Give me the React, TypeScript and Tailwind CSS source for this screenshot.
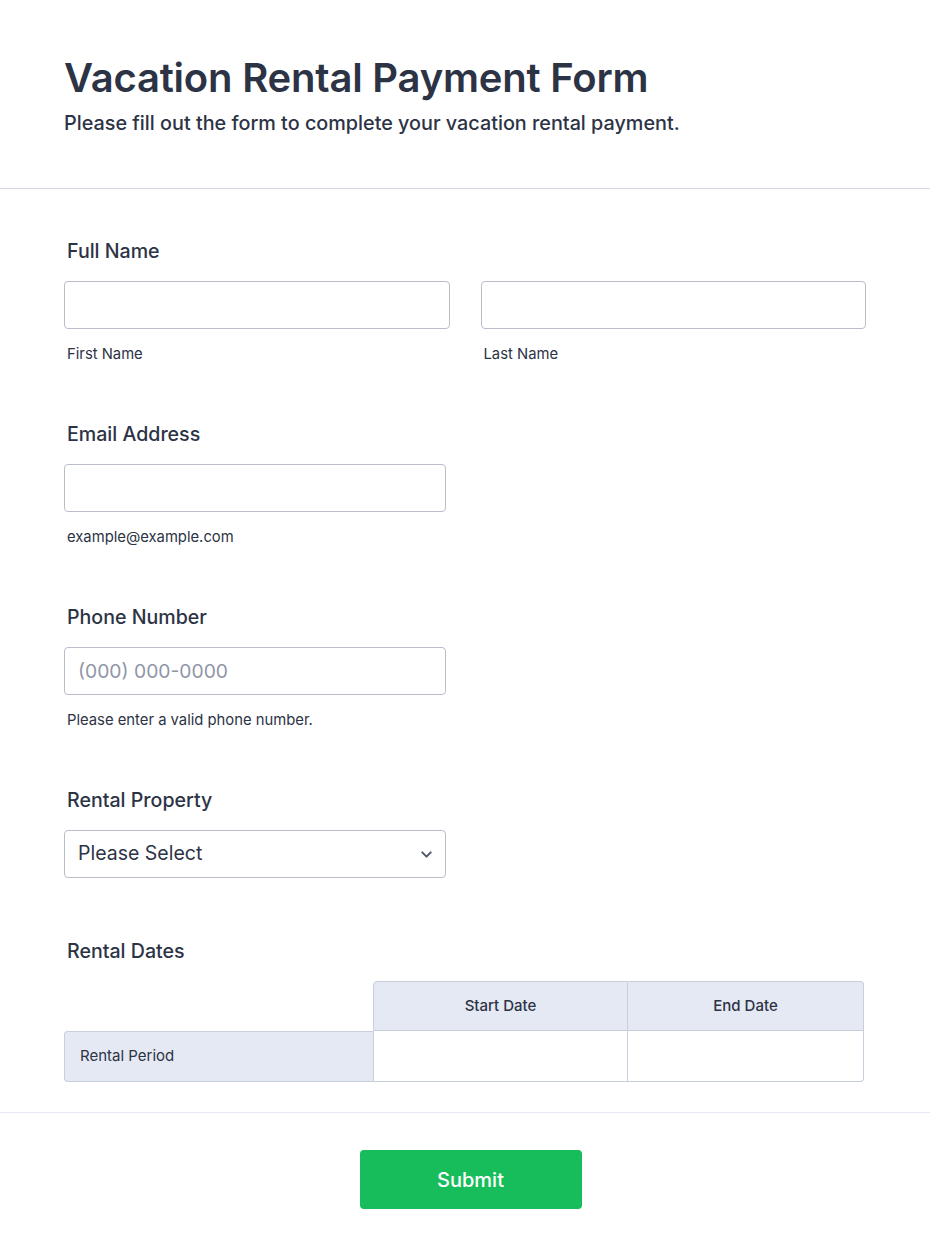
import React from 'react';
import { ChevronDown } from 'lucide-react';

const Label: React.FC<{ children: React.ReactNode }> = ({ children }) => (
  <div className="pl-[3px] text-[19.6px] leading-[28px] font-medium text-[#2c3345]">{children}</div>
);

const Sub: React.FC<{ children: React.ReactNode }> = ({ children }) => (
  <div className="mt-[15px] pl-[3px] text-[14.8px] leading-[20px] text-[#2c3345]">{children}</div>
);

const Input: React.FC<{ placeholder?: string; className?: string }> = ({ placeholder, className }) => (
  <input
    type="text"
    placeholder={placeholder}
    className={`h-[48px] rounded-[4px] border border-[#b8bdc9] bg-white px-[13px] text-[19.3px] text-[#2c3345] placeholder:text-[#8f96a8] outline-none ${className ?? ''}`}
  />
);

export default function App() {
  return (
    <div className="min-h-screen bg-white text-[#2c3345]" style={{ fontFamily: 'Inter, "Noto Sans", sans-serif' }}>
      {/* Header */}
      <header className="px-[64px] pt-[52px] pb-[52px] border-b border-[#d3d6e4]">
        <h1 className="text-[40px] leading-[52px] font-semibold tracking-[-0.2px]">Vacation Rental Payment Form</h1>
        <p className="mt-[6px] text-[19.8px] leading-[26px] font-medium">Please fill out the form to complete your vacation rental payment.</p>
      </header>

      <main className="px-[64px] pt-[48px] pb-[30px] border-b border-[#e6e9f2]">
        {/* Full Name */}
        <section>
          <Label>Full Name</Label>
          <div className="mt-[16px] grid grid-cols-2 gap-[31px]">
            <div>
              <Input className="w-full" />
              <Sub>First Name</Sub>
            </div>
            <div>
              <Input className="w-full" />
              <Sub>Last Name</Sub>
            </div>
          </div>
        </section>

        {/* Email */}
        <section className="mt-[56px]">
          <Label>Email Address</Label>
          <Input className="mt-[16px] w-[382px]" />
          <Sub>example@example.com</Sub>
        </section>

        {/* Phone */}
        <section className="mt-[56px]">
          <Label>Phone Number</Label>
          <Input className="mt-[16px] w-[382px]" placeholder="(000) 000-0000" />
          <Sub>Please enter a valid phone number.</Sub>
        </section>

        {/* Rental Property */}
        <section className="mt-[56px]">
          <Label>Rental Property</Label>
          <div className="mt-[16px] flex h-[48px] w-[382px] items-center justify-between rounded-[4px] border border-[#b8bdc9] bg-white pl-[13px] pr-[10px]">
            <span className="text-[19.5px] text-[#2c3345]">Please Select</span>
            <ChevronDown className="h-[17px] w-[17px] text-[#4f576b]" strokeWidth={2.75} />
          </div>
        </section>

        {/* Rental Dates */}
        <section className="mt-[59px]">
          <Label>Rental Dates</Label>
          <div className="mt-[16px] grid grid-cols-[309px_255px_236px] text-[15px] font-medium">
            <div className="h-[50px]" />
            <div className="flex h-[50px] items-center justify-center rounded-tl-[4px] border border-[#c8cedb] bg-[#e5e9f4]">Start Date</div>
            <div className="flex h-[50px] items-center justify-center rounded-tr-[4px] border border-l-0 border-[#c8cedb] bg-[#e5e9f4]">End Date</div>
            <div className="flex h-[51px] items-center rounded-tl-[4px] rounded-bl-[4px] border border-r-0 border-[#c8cedb] bg-[#e5e9f4] pl-[15px] font-normal">Rental Period</div>
            <div className="h-[51px] border border-t-0 border-[#c8cedb] bg-white" />
            <div className="h-[51px] rounded-br-[4px] border border-t-0 border-l-0 border-[#c8cedb] bg-white" />
          </div>
        </section>
      </main>

      {/* Submit */}
      <div className="flex justify-center pl-[11px] pt-[37px] pb-[50px]">
        <button className="h-[59px] w-[222px] rounded-[4px] bg-[#18bd5b] text-[20px] font-medium text-white">Submit</button>
      </div>
    </div>
  );
}
